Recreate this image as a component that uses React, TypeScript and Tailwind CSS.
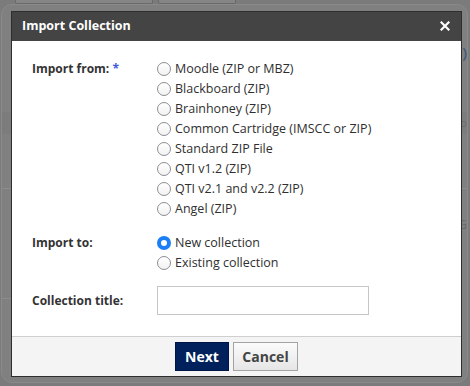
import React, { useState } from 'react';

const sources = [
  'Moodle (ZIP or MBZ)',
  'Blackboard (ZIP)',
  'Brainhoney (ZIP)',
  'Common Cartridge (IMSCC or ZIP)',
  'Standard ZIP File',
  'QTI v1.2 (ZIP)',
  'QTI v2.1 and v2.2 (ZIP)',
  'Angel (ZIP)',
];

const Radio = ({ checked }: { checked: boolean }) =>
  checked ? (
    <span className="flex h-[14px] w-[14px] shrink-0 items-center justify-center rounded-full bg-[#1a7ef5]">
      <span className="h-[6px] w-[6px] rounded-full bg-white" />
    </span>
  ) : (
    <span className="h-[14px] w-[14px] shrink-0 rounded-full border border-[#8e8e93] bg-gradient-to-b from-white to-[#f2f2f2]" />
  );

const RadioRow = ({
  label,
  checked,
  onSelect,
}: {
  label: string;
  checked: boolean;
  onSelect: () => void;
}) => (
  <label onClick={onSelect} className="flex h-5 cursor-pointer items-center gap-[4px]">
    <Radio checked={checked} />
    <span className="text-[12.5px] text-[#2f2f2f]">{label}</span>
  </label>
);

export default function App() {
  const [source, setSource] = useState<string | null>(null);
  const [target, setTarget] = useState('new');
  const [title, setTitle] = useState('');

  return (
    <div
      className="relative h-[386px] w-[470px] overflow-hidden bg-[#7b7b7b]"
      style={{ fontFamily: '"Open Sans", "Liberation Sans", sans-serif' }}
    >
      {/* page behind the overlay */}
      <div className="flex h-[4px] gap-[5px] pl-[15px]">
        <div className="h-[4px] w-[138px] rounded-b-[2px] border border-t-0 border-[#6a6a6a] bg-[#858585]" />
        <div className="h-[4px] w-[78px] rounded-b-[2px] border border-t-0 border-[#6a6a6a] bg-[#858585]" />
      </div>
      <div className="ml-[1px] h-[379px] w-[467px] rounded-[11px] border border-[#8a8a8a] bg-[#808080]">
        <div className="flex h-[60px] items-end justify-end pb-[2px]">
          <span className="text-[15px] font-semibold text-[#3f5a78]">(t)</span>
        </div>
        <div className="mt-[47px] flex h-[22px] items-center justify-end bg-[#7c7c7c] text-[11px] text-[#6d6d6d]">
          <span>bo</span>
        </div>
        <div className="h-[54px]" />
        <div className="h-px bg-[#8c8c8c]" />
        <div className="flex h-[45px] items-end justify-end text-[13px] text-[#6a6a6a]">
          <span>G</span>
        </div>
        <div className="h-[64px]" />
        <div className="h-px w-[20px] bg-[#8c8c8c]" />
      </div>

      {/* dialog */}
      <div className="absolute left-[11px] top-[11px] flex h-[366px] w-[451px] flex-col border border-[#2e2e2e] bg-white">
        <div className="flex h-[29px] shrink-0 items-center justify-between bg-[#444] pl-[10px] pr-[11px]">
          <span className="text-[12.5px] font-bold text-white">Import Collection</span>
          <svg width="10" height="10" viewBox="0 0 10 10" className="mt-[-1px]">
            <path d="M1.5 1.5 L8.5 8.5 M8.5 1.5 L1.5 8.5" stroke="white" strokeWidth="2.2" strokeLinecap="square" />
          </svg>
        </div>

        <div className="flex flex-1 flex-col pl-[20px] pt-[18px]">
          <div className="flex">
            <div className="w-[125px] pt-[2px] text-[12px] font-bold leading-4 text-[#333]">
              Import from: <span className="text-[#3b5bdb]">*</span>
            </div>
            <div className="flex flex-col">
              {sources.map((s) => (
                <RadioRow key={s} label={s} checked={source === s} onSelect={() => setSource(s)} />
              ))}
            </div>
          </div>

          <div className="mt-[14px] flex">
            <div className="w-[125px] pt-[2px] text-[12px] font-bold leading-4 text-[#333]">Import to:</div>
            <div className="flex flex-col">
              <RadioRow label="New collection" checked={target === 'new'} onSelect={() => setTarget('new')} />
              <RadioRow
                label="Existing collection"
                checked={target === 'existing'}
                onSelect={() => setTarget('existing')}
              />
            </div>
          </div>

          <div className="mt-[13px] flex items-center">
            <div className="w-[125px] text-[12px] font-bold text-[#333]">Collection title:</div>
            <input
              value={title}
              onChange={(e) => setTitle(e.target.value)}
              className="h-[29px] w-[212px] border border-[#c6c6c6] bg-white px-1 text-[12px] outline-none"
            />
          </div>
        </div>

        <div className="flex h-[40px] shrink-0 items-center justify-center gap-[4px] border-t border-[#cfcfcf] bg-[#f4f4f4]">
          <button className="h-[29px] w-[54px] border border-[#001544] bg-[#00215c] text-[14px] font-bold text-white">
            Next
          </button>
          <button className="h-[29px] w-[65px] border border-[#a3a3a3] bg-gradient-to-b from-[#fbfbfb] to-[#e6e6e6] text-[14px] font-bold text-[#444]">
            Cancel
          </button>
        </div>
      </div>
    </div>
  );
}
